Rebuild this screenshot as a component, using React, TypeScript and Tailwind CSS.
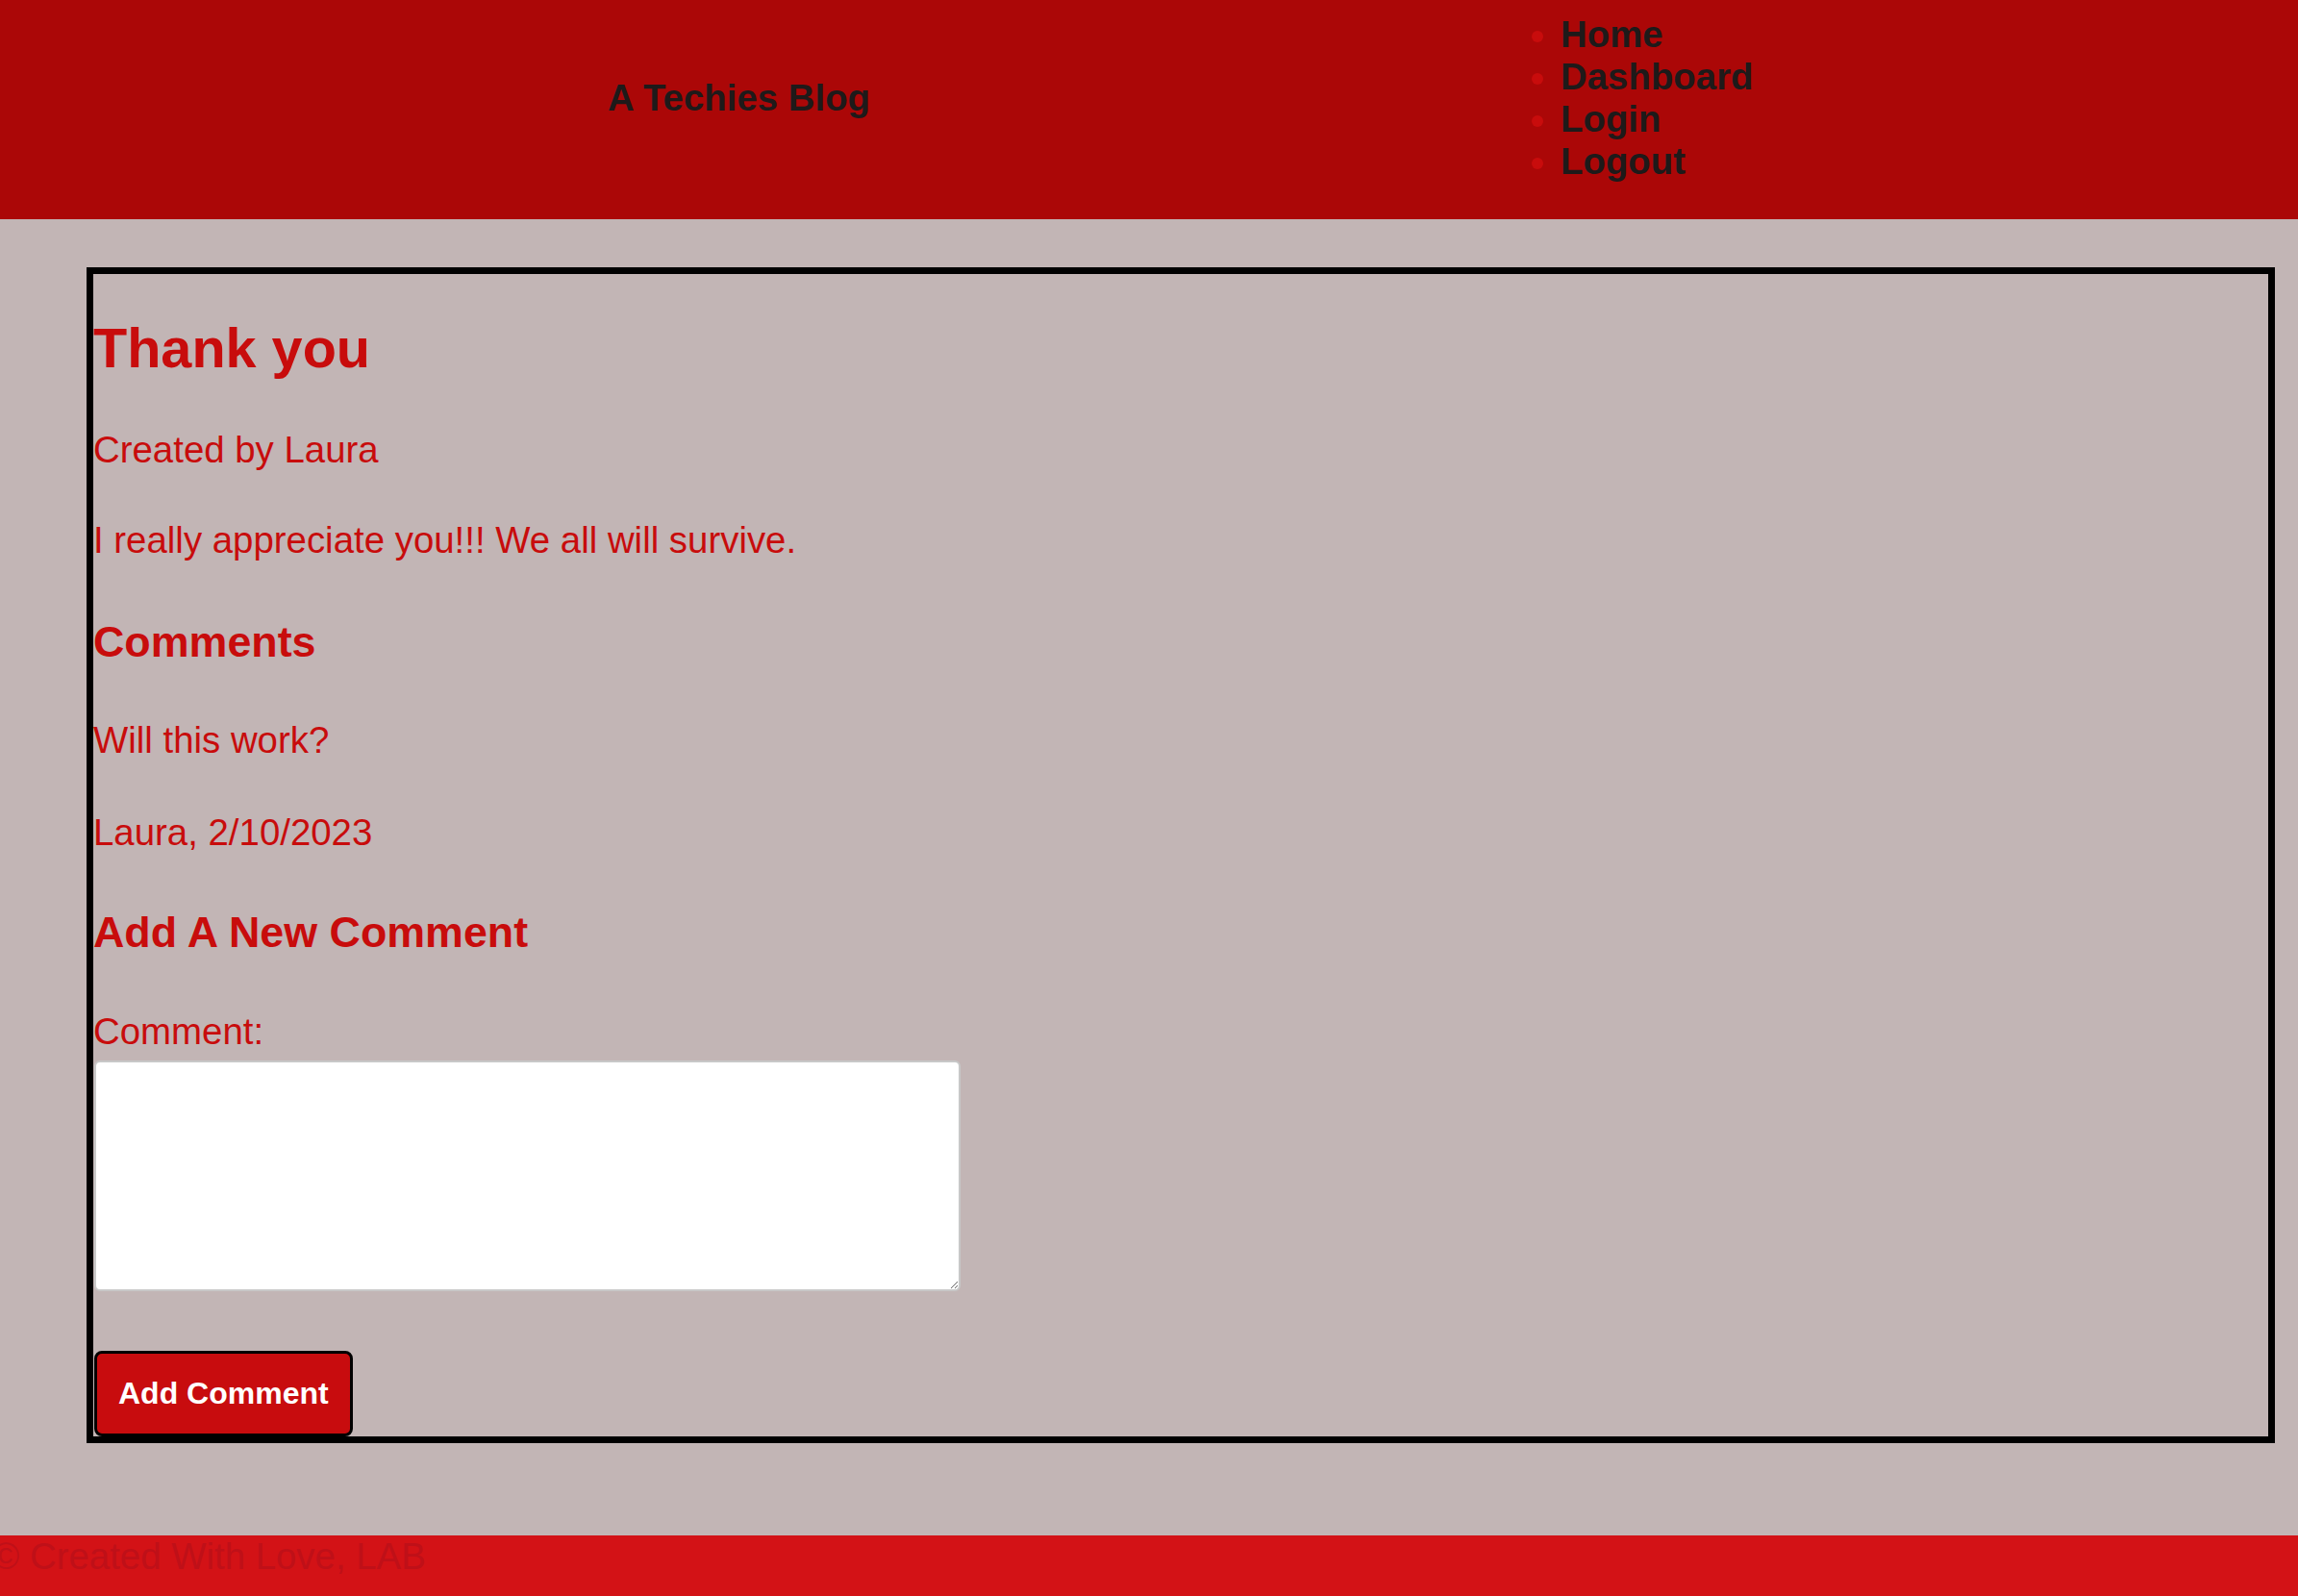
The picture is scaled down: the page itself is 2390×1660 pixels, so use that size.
import type { FC } from "react";

const navLinks = ["Home", "Dashboard", "Login", "Logout"];

const Header: FC = () => {
  return (
    <header className="grid grid-cols-[1592px_1fr] h-[228px] bg-[#ab0707]">
      <h1 className="pl-[632px] pt-[80px] text-[38.4px] leading-[44px] font-bold text-[#1e1a1a]">A Techies Blog</h1>
      <nav>
        <ul className="list-disc list-outside pl-[31px] mt-[14px]">
          {navLinks.map((link) => (
            <li key={link} className="text-[38.4px] leading-[44px] text-[#c80c0c]">
              <a href="#" className="font-bold text-[#1e1a1a]">{link}</a>
            </li>
          ))}
        </ul>
      </nav>
    </header>
  );
};

const Post: FC = () => {
  return (
    <section className="ml-[90px] w-[2276px] border-[7px] border-black text-[#c80c0c]">
      <h1 className="mt-[44px] text-[57.6px] leading-[66px] font-bold">Thank you</h1>
      <p className="mt-[51px] text-[38.4px] leading-[44px]">Created by Laura</p>
      <p className="mt-[50px] text-[38.4px] leading-[44px]">I really appreciate you!!! We all will survive.</p>

      <h2 className="mt-[57px] text-[44.8px] leading-[52px] font-bold">Comments</h2>
      <p className="mt-[55px] text-[38.4px] leading-[44px]">Will this work?</p>
      <p className="mt-[52px] text-[38.4px] leading-[44px]">Laura, 2/10/2023</p>

      <h2 className="mt-[55px] text-[44.8px] leading-[52px] font-bold">Add A New Comment</h2>
      <form>
        <label htmlFor="comment" className="block mt-[56px] text-[38.4px] leading-[44px]">Comment:</label>
        <textarea
          id="comment"
          className="block mt-[8px] ml-px w-[901px] h-[240px] bg-white border-2 border-[#c8c8c8] rounded-md resize"
        />
        <button
          type="submit"
          className="block mt-[62px] ml-px px-[22px] py-[23px] text-[32px] leading-[37px] font-bold text-white bg-[#c80c0e] border-[3px] border-black rounded-lg"
        >
          Add Comment
        </button>
      </form>
    </section>
  );
};

export default function App() {
  return (
    <div className="min-h-screen flex flex-col bg-[#c2b5b5] font-['Liberation_Sans',Arial,sans-serif]">
      <Header />
      <main className="pt-[50px]">
        <Post />
      </main>
      <footer className="mt-[96px] h-[63px] bg-[#d31216] overflow-hidden">
        <p className="-ml-2 text-[38.4px] leading-[44px] text-[#bf1018]">© Created With Love, LAB</p>
      </footer>
    </div>
  );
}
